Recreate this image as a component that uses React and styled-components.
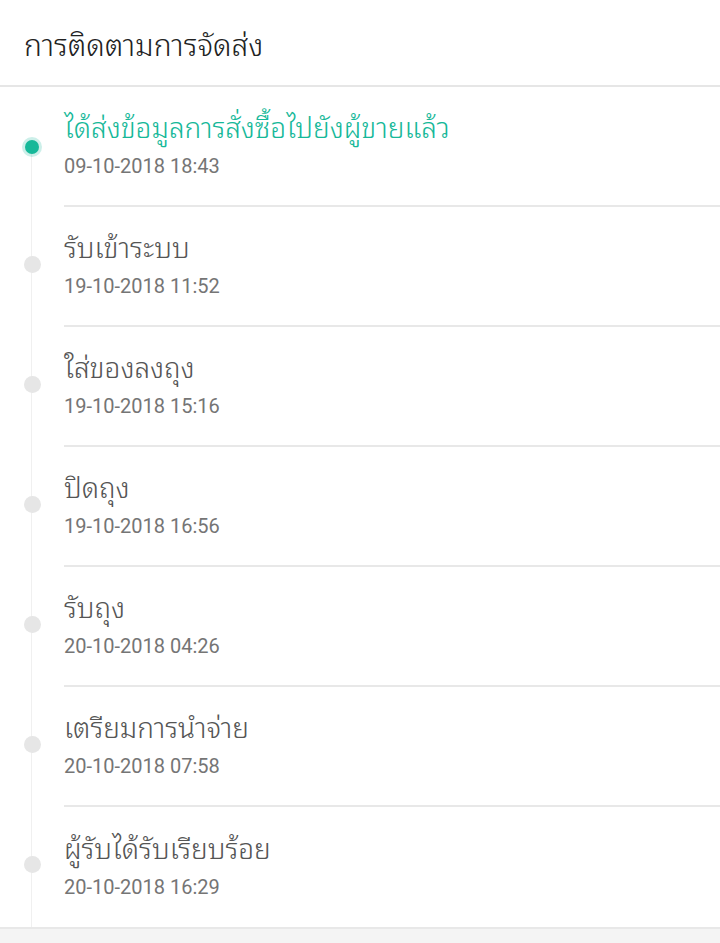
import React from "react";
import styled, { createGlobalStyle } from "styled-components";

const GlobalStyle = createGlobalStyle`
  html, body {
    margin: 0;
    padding: 0;
    background: #f4f4f4;
  }
  body {
    font-family: Roboto, "Noto Sans Thai Looped", "Noto Sans Thai", "Noto Sans", sans-serif;
  }
`;

const Page = styled.div`
  width: 720px;
  min-height: 943px;
  background: #f4f4f4;
`;

const Header = styled.div`
  height: 85px;
  padding: 0 24px;
  display: flex;
  align-items: center;
  background: #fff;
  border-bottom: 2px solid #e6e6e6;
  font-size: 30px;
  font-weight: 300;
  color: #222;
`;

const List = styled.div`
  background: #fff;
  border-bottom: 2px solid #e8e8e8;
`;

const Row = styled.div`
  display: flex;
  height: 120px;
`;

const Rail = styled.div`
  position: relative;
  width: 64px;
  flex-shrink: 0;
  display: flex;
  align-items: center;
  justify-content: center;

  &::before {
    content: "";
    position: absolute;
    left: 31px;
    width: 1px;
    background: #f0f0f0;
    top: ${(p) => (p.$first ? "60px" : "0")};
    bottom: 0;
  }
`;

const Dot = styled.span`
  position: relative;
  z-index: 1;
  width: ${(p) => (p.$active ? "14px" : "17px")};
  height: ${(p) => (p.$active ? "14px" : "17px")};
  margin-bottom: ${(p) => (p.$active ? "0" : "5px")};
  border-radius: 50%;
  background: ${(p) => (p.$active ? "#16b899" : "#e6e6e6")};
  box-shadow: ${(p) =>
    p.$active ? "0 0 0 3px rgba(22, 184, 153, 0.22)" : "none"};
`;

const Body = styled.div`
  flex: 1;
  display: flex;
  flex-direction: column;
  justify-content: center;
  gap: 9px;
  border-bottom: ${(p) => (p.$last ? "none" : "2px solid #e8e8e8")};
`;

const Title = styled.div`
  font-size: 28px;
  font-weight: 300;
  line-height: 30px;
  color: ${(p) => (p.$active ? "#16b899" : "#555")};
`;

const Time = styled.div`
  font-size: 20px;
  line-height: 26px;
  color: #757575;
`;

const steps = [
  { title: "ได้ส่งข้อมูลการสั่งซื้อไปยังผู้ขายแล้ว", time: "09-10-2018 18:43" },
  { title: "รับเข้าระบบ", time: "19-10-2018 11:52" },
  { title: "ใส่ของลงถุง", time: "19-10-2018 15:16" },
  { title: "ปิดถุง", time: "19-10-2018 16:56" },
  { title: "รับถุง", time: "20-10-2018 04:26" },
  { title: "เตรียมการนำจ่าย", time: "20-10-2018 07:58" },
  { title: "ผู้รับได้รับเรียบร้อย", time: "20-10-2018 16:29" },
];

function App() {
  return (
    <Page>
      <GlobalStyle />
      <Header>การติดตามการจัดส่ง</Header>
      <List>
        {steps.map((s, idx) => {
          const first = idx === 0;
          const last = idx === steps.length - 1;
          return (
            <Row key={s.time}>
              <Rail $first={first}>
                <Dot $active={first} />
              </Rail>
              <Body $last={last}>
                <Title $active={first}>{s.title}</Title>
                <Time>{s.time}</Time>
              </Body>
            </Row>
          );
        })}
      </List>
    </Page>
  );
}

export default App;
